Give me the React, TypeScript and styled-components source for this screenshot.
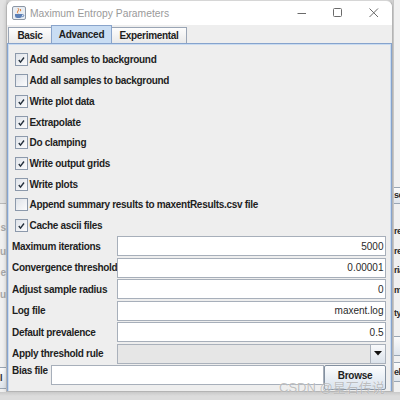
import styled, { createGlobalStyle } from "styled-components";

const GlobalStyle = createGlobalStyle`
  html, body { margin: 0; padding: 0; }
  body {
    width: 400px;
    height: 400px;
    overflow: hidden;
    background: #dadada;
    font-family: "Liberation Sans", Arial, sans-serif;
  }
`;

const Desktop = styled.div`
  position: relative;
  width: 400px;
  height: 400px;
  display: flex;
  flex-direction: column;
  background: #d8d8d8;
  overflow: hidden;
`;

const TopRow = styled.div`
  display: flex;
  height: 392px;
`;

const BottomStrip = styled.div`
  flex: 1;
  background: linear-gradient(#c9c9c9, #dcdcdc 4px);
`;

/* bits of the window lying behind */
const LeftPeek = styled.div`
  width: 6px;
  flex: none;
  display: flex;
  flex-direction: column;
  background: #f0f0f0;
  overflow: hidden;
`;

const PeekBlock = styled.div<{ $h: number; $bg?: string }>`
  height: ${(p) => p.$h}px;
  flex: none;
  background: ${(p) => p.$bg || "transparent"};
`;

const PeekLine = styled.div<{ $top?: number }>`
  display: flex;
  justify-content: flex-end;
  margin-top: ${(p) => p.$top || 0}px;
  height: 14px;
  line-height: 14px;
  font-size: 10px;
  font-weight: bold;
  white-space: nowrap;
  color: #a8a8a8;
`;

const RightPeek = styled.div`
  flex: 1;
  display: flex;
  flex-direction: column;
  background: #f0f0f0;
  border-left: 1px solid #c6c6c6;
  overflow: hidden;
`;

const RightLine = styled.div<{ $top?: number }>`
  margin-top: ${(p) => p.$top || 0}px;
  height: 14px;
  line-height: 14px;
  font-size: 9px;
  font-weight: bold;
  letter-spacing: -0.5px;
  white-space: nowrap;
  color: #2a2a2a;
`;

const PeekButton = styled.div<{ $top: number; $h: number }>`
  margin-top: ${(p) => p.$top}px;
  height: ${(p) => p.$h}px;
  line-height: ${(p) => p.$h}px;
  font-size: 9px;
  font-weight: bold;
  letter-spacing: -0.5px;
  color: #2a2a2a;
  white-space: nowrap;
  background: linear-gradient(#fbfbfb, #dfe5ec);
  border-top: 1px solid #9aa6b4;
  border-bottom: 1px solid #9aa6b4;
`;

/* the dialog */
const Window = styled.div`
  width: 387px;
  flex: none;
  box-sizing: border-box;
  display: flex;
  flex-direction: column;
  border: 1px solid #b4b4b4;
  border-top-color: #d6d6d6;
  border-radius: 7px 7px 0 0;
  background: #eeeeee;
  overflow: hidden;
  box-shadow: 0 0 4px rgba(0, 0, 0, 0.18);
`;

const TitleBar = styled.div`
  height: 24px;
  flex: none;
  display: flex;
  align-items: center;
  padding-left: 5px;
  background: #ffffff;
`;

const Title = styled.span`
  margin-left: 4px;
  font-size: 10.3px;
  color: #9a9a9a;
  white-space: nowrap;
`;

const Controls = styled.div`
  margin-left: auto;
  display: flex;
  height: 100%;
`;

const Ctrl = styled.div`
  width: 36px;
  height: 100%;
  display: flex;
  align-items: center;
  justify-content: center;
`;

const TabStrip = styled.div`
  height: 18px;
  flex: none;
  display: flex;
  align-items: flex-end;
  padding-left: 1px;
`;

const Tab = styled.div<{ $active?: boolean; $w: number }>`
  width: ${(p) => p.$w}px;
  height: ${(p) => (p.$active ? 18 : 16)}px;
  box-sizing: border-box;
  margin-right: -1px;
  display: flex;
  align-items: center;
  justify-content: center;
  border: 1px solid ${(p) => (p.$active ? "#89a4cb" : "#9aa5b5")};
  border-bottom: none;
  background: ${(p) =>
    p.$active ? "#c9ddf3" : "linear-gradient(#fdfdfd, #e9e9e9)"};
  font-size: 10px;
  font-weight: bold;
  letter-spacing: -0.3px;
  color: #1e1e1e;
  position: relative;
  z-index: ${(p) => (p.$active ? 1 : 0)};
`;

const Panel = styled.div`
  flex: 1;
  box-sizing: border-box;
  display: flex;
  flex-direction: column;
  border: 1px solid #86a3cd;
  border-bottom: none;
  box-shadow: inset 1px 1px 0 #c9dbf0, inset -1px 0 0 #c9dbf0;
  padding: 5.65px 5px 0 4px;
`;

const CheckRow = styled.div`
  height: 20.7px;
  flex: none;
  display: flex;
  align-items: center;
  padding-left: 3px;
`;

const Box = styled.div`
  width: 13px;
  height: 13px;
  flex: none;
  box-sizing: border-box;
  border: 1px solid #8c99ab;
  background: linear-gradient(135deg, #dfe3e9, #fbfbfc);
  display: flex;
  align-items: center;
  justify-content: center;
`;

const Label = styled.span`
  font-size: 10px;
  font-weight: bold;
  letter-spacing: -0.3px;
  color: #1e1e1e;
  white-space: nowrap;
`;

const CheckText = styled(Label)`
  margin-left: 1.5px;
`;

const Form = styled.div`
  display: flex;
  flex-direction: column;
  gap: 1.5px;
  margin-top: 0.3px;
`;

const FormRow = styled.div<{ $top?: boolean }>`
  display: flex;
  align-items: ${(p) => (p.$top ? "flex-start" : "center")};
  height: 20px;
`;

const FieldLabel = styled(Label)<{ $w?: number }>`
  width: ${(p) => (p.$w ? `${p.$w}px` : "auto")};
  margin-right: ${(p) => (p.$w ? 0 : 3)}px;
  flex: none;
  overflow: hidden;
`;

const Field = styled.div`
  flex: 1;
  height: 20px;
  box-sizing: border-box;
  display: flex;
  align-items: center;
  justify-content: flex-end;
  padding-right: 1.5px;
  border: 1px solid #a7afba;
  background: #ffffff;
  font-size: 10px;
  color: #2a2a2a;
`;

const Combo = styled.div`
  flex: 1;
  height: 20px;
  box-sizing: border-box;
  display: flex;
  border: 1px solid #aab1bb;
  background: #e6e6e6;
`;

const ComboArrow = styled.div`
  margin-left: auto;
  width: 15px;
  height: 100%;
  box-sizing: border-box;
  border-left: 1px solid #aab1bb;
  background: linear-gradient(#f8f9fb, #dbe2ea);
  display: flex;
  align-items: center;
  justify-content: center;
`;

const BrowseButton = styled.div`
  width: 62px;
  height: 25px;
  flex: none;
  box-sizing: border-box;
  border: 1px solid #8390a0;
  border-radius: 2px;
  background: linear-gradient(#fcfdfe, #d8e2ed);
  display: flex;
  justify-content: center;
  padding-top: 4px;
  font-size: 10px;
  font-weight: bold;
  letter-spacing: -0.3px;
  color: #1e1e1e;
`;

const Watermark = styled.div`
  position: absolute;
  left: 279px;
  top: 377px;
  font-family: "Liberation Sans", "Noto Sans CJK SC", sans-serif;
  font-size: 13px;
  color: rgba(130, 130, 130, 0.5);
  text-shadow: 0 0 1px rgba(255, 255, 255, 0.9);
  white-space: nowrap;
`;

const checks: [string, boolean][] = [
  ["Add samples to background", true],
  ["Add all samples to background", false],
  ["Write plot data", true],
  ["Extrapolate", true],
  ["Do clamping", true],
  ["Write output grids", true],
  ["Write plots", true],
  ["Append summary results to maxentResults.csv file", false],
  ["Cache ascii files", true],
];

const fields: [string, string][] = [
  ["Maximum iterations", "5000"],
  ["Convergence threshold", "0.00001"],
  ["Adjust sample radius", "0"],
  ["Log file", "maxent.log"],
  ["Default prevalence", "0.5"],
];

const AppIcon = () => (
  <svg width="14" height="14" viewBox="0 0 14 14">
    <rect x="0.5" y="0.5" width="13" height="13" rx="1.5" fill="#e8edf3" stroke="#8c97a6" />
    <path d="M6 2.2q1.3 1.4 0 2.8q-1.2 1.3 0 2.4M8.2 3q1 1.1 0 2.3" stroke="#e0782c" strokeWidth="1" fill="none" />
    <path d="M3 8h7v1.8a2.2 2.2 0 0 1-2.2 2.2h-2.6A2.2 2.2 0 0 1 3 9.8z" fill="#5b7fb6" />
    <path d="M10 8.6h0.8a1 1 0 0 1 0 2H10" stroke="#5b7fb6" strokeWidth="0.9" fill="none" />
  </svg>
);

const Check = () => (
  <svg width="9" height="9" viewBox="0 0 9 9">
    <path d="M1.8 5L3.5 7.2L7 2.5" stroke="#26313d" strokeWidth="1.4" fill="none" />
  </svg>
);

export default function App() {
  return (
    <>
      <GlobalStyle />
      <Desktop>
        <TopRow>
          <LeftPeek>
            <PeekBlock $h={203} $bg="#e2e2e2" />
            <PeekBlock $h={1} $bg="#b8b8b8" />
            <PeekLine $top={17}>s</PeekLine>
            <PeekLine $top={10}>u</PeekLine>
            <PeekLine $top={7}>e</PeekLine>
            <PeekLine $top={8}>u</PeekLine>
            <PeekBlock $h={65} />
            <PeekButton $top={0} $h={20}>l</PeekButton>
          </LeftPeek>

          <Window>
            <TitleBar>
              <AppIcon />
              <Title>Maximum Entropy Parameters</Title>
              <Controls>
                <Ctrl>
                  <svg width="10" height="10" viewBox="0 0 10 10">
                    <path d="M0.5 5.5h8.5" stroke="#6a6a6a" strokeWidth="1" />
                  </svg>
                </Ctrl>
                <Ctrl>
                  <svg width="10" height="10" viewBox="0 0 10 10">
                    <rect x="0.5" y="0.5" width="8" height="8" rx="1" stroke="#6a6a6a" fill="none" />
                  </svg>
                </Ctrl>
                <Ctrl>
                  <svg width="10" height="10" viewBox="0 0 10 10">
                    <path d="M0.5 0.5L9 9M9 0.5L0.5 9" stroke="#6a6a6a" strokeWidth="1" />
                  </svg>
                </Ctrl>
              </Controls>
            </TitleBar>

            <TabStrip>
              <Tab $w={44}>Basic</Tab>
              <Tab $w={61} $active>Advanced</Tab>
              <Tab $w={76}>Experimental</Tab>
            </TabStrip>

            <Panel>
              {checks.map(([text, on]) => (
                <CheckRow key={text}>
                  <Box>{on && <Check />}</Box>
                  <CheckText>{text}</CheckText>
                </CheckRow>
              ))}
              <Form>
                {fields.map(([label, value]) => (
                  <FormRow key={label}>
                    <FieldLabel $w={105}>{label}</FieldLabel>
                    <Field>{value}</Field>
                  </FormRow>
                ))}
                <FormRow>
                  <FieldLabel $w={105}>Apply threshold rule</FieldLabel>
                  <Combo>
                    <ComboArrow>
                      <svg width="8" height="5" viewBox="0 0 8 5">
                        <path d="M0 0h8L4 4.5z" fill="#111" />
                      </svg>
                    </ComboArrow>
                  </Combo>
                </FormRow>
                <FormRow $top>
                  <FieldLabel>Bias file</FieldLabel>
                  <Field />
                  <BrowseButton>Browse</BrowseButton>
                </FormRow>
              </Form>
            </Panel>
          </Window>

          <RightPeek>
            <PeekButton $top={187} $h={15}>se</PeekButton>
            <RightLine $top={20}>re</RightLine>
            <RightLine $top={6}>re</RightLine>
            <RightLine $top={5}>ria</RightLine>
            <RightLine $top={6}>m</RightLine>
            <RightLine $top={9}>ty</RightLine>
            <PeekButton $top={16} $h={18}> </PeekButton>
            <PeekButton $top={6} $h={18}>elp</PeekButton>
          </RightPeek>
        </TopRow>
        <BottomStrip />
        <Watermark>CSDN @星石传说</Watermark>
      </Desktop>
    </>
  );
}
